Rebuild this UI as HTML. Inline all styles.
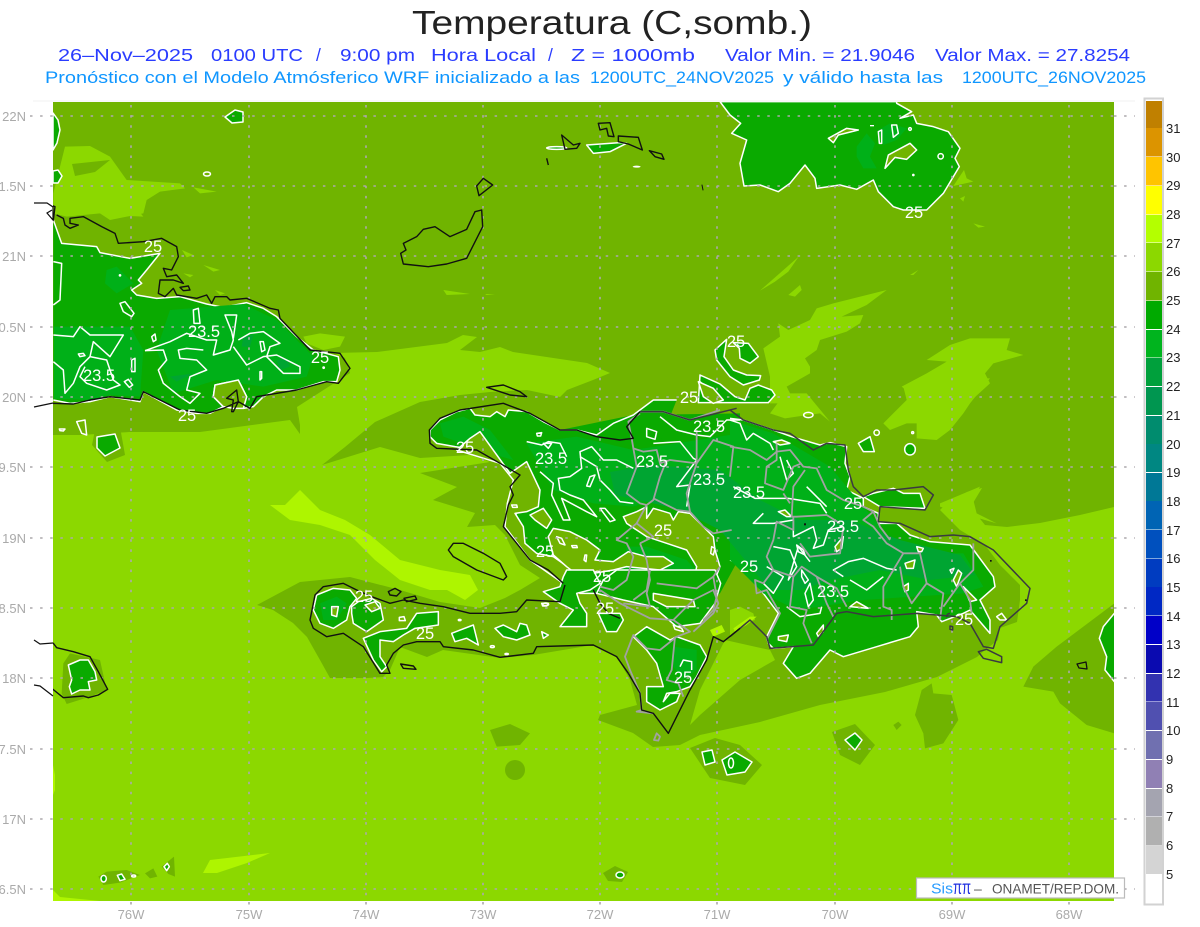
<!DOCTYPE html>
<html><head><meta charset="utf-8"><title>Temperatura</title>
<style>
html,body{margin:0;padding:0;background:#fff}
svg{display:block;font-family:"Liberation Sans",sans-serif}
.m{fill:#70b400}.b{fill:#8cd800}.v{fill:#aef500}
.d{fill:#0aaa00;stroke:#fff;stroke-width:4.5;stroke-linejoin:round}
.dn{fill:#0aaa00}
.l{fill:#00b018}.x{fill:#00a532}
.mw{fill:#70b400;stroke:#fff;stroke-width:4.5;stroke-linejoin:round}
.w{fill:none;stroke:#fff;stroke-width:4.5;stroke-linejoin:round}
.k{fill:none;stroke:#111;stroke-width:4.2;stroke-linejoin:round}
.kd{fill:none;stroke:#3a3a40;stroke-width:4.5;stroke-linejoin:round}
.g{fill:none;stroke:#a2a2a2;stroke-width:5.4;stroke-linejoin:round}
.t{fill:#fff;font-size:16.5px;text-anchor:middle}
.a{fill:#aaa;font-size:13px}
.c{fill:#222;font-size:13px}
</style></head><body>
<svg width="1200" height="927" viewBox="0 0 1200 927" xmlns="http://www.w3.org/2000/svg">
<rect width="1200" height="927" fill="#fff"/>
<text x="412" y="34" font-size="33" fill="#222" textLength="400" lengthAdjust="spacingAndGlyphs">Temperatura (C,somb.)</text>
<g font-size="17.5" fill="#2a3cff">
<text x="58" y="61" textLength="135" lengthAdjust="spacingAndGlyphs">26–Nov–2025</text>
<text x="211" y="61" textLength="92" lengthAdjust="spacingAndGlyphs">0100 UTC</text>
<text x="316" y="61">/</text>
<text x="340" y="61" textLength="75" lengthAdjust="spacingAndGlyphs">9:00 pm</text>
<text x="431" y="61" textLength="105" lengthAdjust="spacingAndGlyphs">Hora Local</text>
<text x="548" y="61">/</text>
<text x="571" y="61" textLength="124" lengthAdjust="spacingAndGlyphs">Z = 1000mb</text>
<text x="725" y="61" textLength="190" lengthAdjust="spacingAndGlyphs">Valor Min. = 21.9046</text>
<text x="935" y="61" textLength="195" lengthAdjust="spacingAndGlyphs">Valor Max. = 27.8254</text>
</g>
<g font-size="17" fill="#0f96ff">
<text x="45" y="83" textLength="535" lengthAdjust="spacingAndGlyphs">Pronóstico con el Modelo Atmósferico WRF inicializado a las</text>
<text x="590" y="83" textLength="184" lengthAdjust="spacingAndGlyphs">1200UTC_24NOV2025</text>
<text x="783" y="83" textLength="160" lengthAdjust="spacingAndGlyphs">y válido hasta las</text>
<text x="962" y="83" textLength="184" lengthAdjust="spacingAndGlyphs">1200UTC_26NOV2025</text>
</g>
<line x1="33" y1="101" x2="1135" y2="101" stroke="#f0f0f0"/>

<svg x="53" y="102" width="1061" height="799" viewBox="53 102 1061 799">
<rect x="53" y="102" width="1061" height="799" class="b"/>
<!-- very bright -->
<polygon class="v" points="270,505 285,505 300,490 320,510 345,520 370,535 400,560 440,570 470,575 478,590 465,600 447,590 430,590 400,580 375,560 350,535 320,525 290,520"/>
<polygon class="v" points="203,873 210,860 270,853 247,863 217,873"/>
<polygon class="v" points="53,890 60,897 100,901 53,901"/>
<polygon class="v" points="53,765 55,775 55,790 53,795"/>
<!-- main mid -->
<polygon class="m" points="53,102 1114,102 1114,507 1080,515 1040,523 1007,527 985,525 977,515 973,503 982,488 967,492 947,503 940,510 950,520 960,530 985,545 1000,565 1020,585 1020,600 1017,622 1000,628 998,640 985,650 977,657 937,677 885,692 820,705 760,722 700,735 680,745 653,747 633,733 598,720 600,715 637,705 630,680 617,657 593,645 533,655 500,658 443,650 427,657 400,647 390,670 383,677 367,678 330,678 320,660 307,637 293,623 273,610 257,605 300,582 350,577 400,590 440,602 480,608 505,598 520,590 540,578 520,565 505,535 495,525 467,527 475,513 433,500 457,487 420,473 490,462 470,455 420,458 380,447 322,465 290,420 200,432 130,432 80,435 53,435"/>
<!-- bright overlays -->
<polygon class="b" points="333,353 377,352 447,343 463,335 477,337 460,350 480,352 500,347 513,352 587,363 610,373 593,380 567,390 560,397 527,390 490,392 460,395 420,402 375,422 345,447 322,465 300,470 300,425 297,407 350,373 345,358"/>
<g class="b" transform="translate(0 0) scale(.33333)">
<polygon points="160,580 195,440 270,438 330,470 380,540 540,550 555,565 480,575 440,600 430,640 330,660 300,640 200,650 160,640"/>
<polygon points="580,562 650,575 600,580"/>
</g>
<polygon class="m" points="72,164 110,160 95,172 75,176"/>
<g class="b" transform="translate(30 200) scale(.33333)">
<polygon points="70,0 300,0 340,50 230,45 170,30 70,40"/>
<polygon points="456,150 490,165 470,172"/><polygon points="520,195 570,210 550,215"/><polygon points="460,220 490,225 480,232"/><polygon points="555,270 585,280 570,285"/>
<polygon points="820,410 870,400 945,410 930,440 880,450 830,430"/>
</g>
<g class="b" transform="translate(300 100) scale(.33333)">
<polygon points="430,570 510,582 440,585"/><polygon points="555,582 585,582 560,585"/>
</g>
<g class="b" transform="translate(700 100) scale(.33333)">
<polygon points="180,572 296,470 265,515 225,545"/><polygon points="265,585 300,555 305,570 285,590"/><polygon points="630,525 655,510 640,525"/>
<polygon points="350,625 400,610 560,570 500,615 425,650 490,645 480,670 440,695 360,720 350,750 315,775 330,800 330,820 260,860 285,910 210,910 210,830 190,745 240,710 235,670 265,690 330,660"/>
<polygon points="680,780 750,735 810,715 930,715 920,750 970,765 880,790 855,820 870,850 810,905 660,905 605,860 680,820 740,785"/>
<polygon points="760,258 792,210 800,235 820,245"/><polygon points="780,295 795,288 790,305"/><polygon points="820,370 855,380 835,383"/>
</g>
<g class="b" transform="translate(730 380) scale(.33333)">
<polygon points="120,100 150,60 180,40 230,40 300,125 270,100 200,110 165,115"/>
<polygon points="460,130 530,60 520,20 570,-5 780,-5 720,70 700,100 660,150 620,180 560,175 560,130 530,130 480,150"/>
<polygon points="630,370 750,320 730,360 740,400 800,430 660,390 630,380"/>
</g>
<polygon class="b" points="725,640 770,650 775,660 740,680 700,715 690,725 700,690"/>
<!-- extra mid patches -->
<g class="m" transform="translate(880 400) scale(.33333)">
<polygon points="430,860 460,800 530,740 703,610 703,1000 620,975 540,910 520,875"/>
<polygon points="125,870 155,850 160,880 215,885 235,960 190,1030 135,1045 130,1000 105,945"/>
<polygon points="40,975 55,965 65,975 50,990"/>
</g>
<g class="m" transform="translate(300 570) scale(.33333)">
<polygon points="570,480 630,462 690,490 660,525 590,530"/>
</g>
<circle class="m" cx="515" cy="770" r="10"/>
<g class="m" transform="translate(40 600) scale(.33333)">
<polygon points="70,190 90,160 180,180 200,270 150,290 80,312 65,280"/>
<polygon points="175,830 200,815 260,810 300,825 240,848 190,855"/>
<polygon points="315,820 340,805 352,830 330,835"/>
<polygon points="365,800 402,770 405,830 385,822"/>
</g>
<polygon class="m" points="690,748 715,738 740,745 762,765 745,785 710,778"/>
<polygon class="m" points="832,732 855,724 875,745 860,765 840,755"/>
<polygon class="m" points="603,873 615,866 628,872 622,882 608,881"/>
<polygon class="m" points="95,430 120,427 125,455 107,462 92,445"/>

<!-- Cuba / west land -->
<g transform="translate(30 200) scale(.33333)">
<polyline class="d" points="70,60 95,130 200,140 210,158 300,175 360,165 390,160 350,210 325,240 335,250 305,270 320,285 380,295 450,290 530,312 580,322 650,308 700,325 740,350 800,410 850,450 925,470 930,510 920,545 880,545 800,570 740,570 700,590 670,620 640,625 650,590 625,540 555,555 550,590 580,620 540,640 500,640 440,630 340,575 330,605 240,590 180,605 120,610 70,600"/>
<polygon class="l" points="72,380 300,380 340,450 330,590 240,585 180,600 72,596"/>
<polygon class="l" points="420,330 640,312 740,360 850,470 830,530 700,560 560,540 430,580 380,450"/>
<polygon class="l" points="230,210 260,200 310,250 260,280 225,250"/>
<polygon class="x" points="740,480 770,475 780,500 750,510"/><polygon class="x" points="640,410 670,405 660,440 635,440"/><polygon class="x" points="420,530 490,520 440,545"/>
<polygon class="mw" points="555,555 625,540 650,590 640,625 610,625 580,620 550,590"/>
<polyline class="w" points="70,185 95,190 90,300 70,315"/>
<polyline class="w" points="70,405 130,410 150,380 180,405 250,405 280,405 240,470 190,425 180,470 150,500 130,550 105,580 100,510 70,485"/>
<polygon class="w" points="270,310 285,305 312,340 305,350 280,335"/>
<polygon class="w" points="365,410 375,402 378,420 370,425"/>
<polygon class="w" points="145,462 160,460 165,467 150,470"/>
<polygon class="w" points="305,480 315,475 315,515 305,515"/>
<polygon class="w" points="283,545 295,538 308,555 298,562"/>
<polyline class="w" points="180,470 230,480 250,540 270,555 230,570 170,550 150,530 165,500"/>
<polyline class="w" points="345,452 420,425 470,400 530,420 560,420 550,465 600,450 610,420 605,395 585,345 620,345 610,415"/>
<polygon class="w" points="490,330 505,325 510,370 492,370"/>
<polyline class="w" points="345,452 400,450 410,480 385,510 400,550 450,590 480,610 510,580 470,570 480,530 530,510 500,480 450,475 445,450 470,445 520,450"/>
<polyline class="w" points="610,440 650,495 680,480 700,470 740,465 810,500 810,520 760,520 710,470 720,440 750,430 700,395 660,400 625,420"/>
<polygon class="w" points="690,425 700,425 705,450 695,455"/>
<polygon class="w" points="690,515 695,515 695,535 690,540"/>
<circle class="w" cx="881" cy="503" r="2"/>
<circle cx="270" cy="226" r="4" fill="#fff"/>
<polygon class="w" points="88,687 105,687 100,693 90,692"/>
<polygon class="w" points="140,665 165,660 170,705 155,700"/>
</g>
<polygon class="d" style="stroke-width:1.5" points="97,437 115,434 120,448 105,456 97,448"/>

<!-- Hispaniola -->
<g transform="translate(420 380) scale(.33333)">
<polygon class="dn" points="420,150 640,105 960,100 960,530 900,640 880,660 540,640 430,610 330,540 260,440 285,300"/>
<polyline class="d" points="540,640 480,640 430,610 330,540 260,440 290,400 285,300 240,250 170,210 105,200 50,190 30,170 30,150 60,120 110,95 150,85 165,105 210,110 230,95 255,110 265,90 320,95 370,125 420,150 470,150 530,165 580,130 640,105 700,60 770,60"/>
<polygon class="l" points="320,190 470,170 640,210 960,160 960,400 780,330 640,380 520,370 400,330"/>
<polygon class="l" points="60,130 130,110 210,150 280,240 210,220 70,170"/>
<polygon class="l" points="620,500 680,500 800,540 870,620 700,610 600,620"/>
</g>
<g transform="translate(730 380) scale(.33333)">
<polyline class="d" points="0,115 40,120 130,150 185,170 270,195 300,188 350,200 345,250 360,290 350,330 400,355 400,380 445,400 445,430 500,430 540,465 600,485 720,495 790,590 795,620 750,660 780,720 780,760 720,690 700,700 635,725 620,705 560,695 565,740 540,770 440,800 340,830 300,810 240,880 200,895 160,850 190,800 130,805 115,790 110,770 145,700 130,680 100,640 70,600 60,570 0,540"/>
<polygon class="d" points="400,350 430,340 490,325 520,340 570,340 585,385 450,380"/>
<polygon class="l" points="0,120 130,160 300,260 400,380 520,520 700,520 760,620 700,640 400,660 200,690 100,640 0,540"/>
</g>
<polygon class="x" points="610,472 650,465 720,470 760,500 800,520 850,520 900,540 960,555 975,575 930,580 880,570 830,580 800,590 770,590 745,560 720,530 680,510 640,500 615,495"/>

<!-- top lobes -->
<g transform="translate(700 100) scale(.33333)">
<polygon class="d" points="145,730 175,770 150,790 120,775 118,745 100,728"/>
<polygon class="d" points="80,718 45,750 50,780 90,830 130,855 178,840 182,827 140,825 100,810 72,770"/>
<polygon class="d" points="0,825 60,852 105,890 135,900 150,865 175,855 215,870 225,885 205,908 -5,908"/>
<polyline class="w" points="0,845 50,890 55,905"/>
<polygon class="d" points="60,5 90,45 122,70 95,100 140,120 120,190 132,258 180,255 235,275 270,250 315,195 345,235 350,265 420,255 470,268 520,240 535,275 580,320 610,330 680,330 730,280 778,200 765,175 780,145 745,95 700,80 650,70 640,45 600,55 635,35 590,10 590,5"/>
<polygon class="l" points="470,140 500,100 525,130 510,170 530,205 490,205 470,170"/>
<polygon class="l" points="535,90 570,70 620,85 590,120 550,135"/>
<polygon class="mw" points="385,115 440,85 475,90 415,105 400,128"/>
<polygon class="mw" points="555,205 565,165 630,130 650,150 620,178 585,172"/>
<polygon class="w" points="535,95 545,90 545,130 538,130"/>
<polygon class="w" points="575,75 590,75 595,100 580,112"/>
<circle class="w" cx="630" cy="87" r="4"/><circle class="w" cx="722" cy="169" r="8"/>
<circle cx="640" cy="225" r="4" fill="#fff"/><rect x="510" y="75" width="12" height="4" fill="#fff"/>
</g>
<g transform="translate(420 380) scale(.33333)">
<polygon class="mw" points="835,5 880,25 910,60 880,70 850,50"/>
<polygon class="mw" points="180,155 270,280 320,245 360,330 355,380 320,395 285,400 310,440 315,490 350,520 400,530 450,565 430,610 330,540 255,440 262,370 280,300 240,250 110,210 150,175"/>
<polygon class="mw" points="330,405 370,385 395,420 380,445 345,420"/>
<polygon class="mw" points="385,470 400,445 450,455 500,480 540,510 525,540 580,545 625,515 680,530 730,530 760,550 720,570 620,560 580,570 520,580 480,590 440,560 400,525"/>
<polygon class="mw" points="610,410 650,395 680,380 680,415 700,385 750,400 760,420 775,395 810,400 830,420 880,470 885,510 900,560 880,610 830,630 820,610 830,560 800,510 740,490 680,470 620,430"/>
<polygon class="w" points="680,145 710,155 705,178 680,170"/>
<polyline class="w" points="720,110 770,150 830,165 870,170 920,120 960,120"/>
<polyline class="w" points="700,190 780,185 820,235 830,240 770,320 810,315 800,380"/>
<polyline class="w" points="320,185 365,195 385,185 420,190 440,230"/>
<polyline class="w" points="360,275 400,310 395,345 430,420 450,420 425,355 500,395 530,410 490,360 450,345 420,330 415,295 450,290 485,265 480,215 515,200 550,240 590,240 640,265"/>
<polyline class="w" points="480,230 530,260 540,300 570,330 600,365 640,370"/>
<polygon class="w" points="510,290 525,285 510,320 500,318"/>
<polygon class="w" points="540,385 555,385 585,420 570,425"/>
<polygon class="w" points="410,470 425,475 435,495 420,490"/>
<polygon class="w" points="455,497 470,497 472,503 458,503"/>
<polygon class="w" points="495,525 500,525 498,545 492,540"/>
<polygon class="w" points="275,375 290,375 292,382 278,382"/>
<polygon class="w" points="350,160 365,158 362,168 352,168"/>
<polygon class="w" points="370,190 395,190 385,205"/>
<polygon class="w" points="365,670 385,670 380,678 368,678"/>
<polygon class="w" points="875,625 880,625 880,632 875,632"/>
<polygon class="w" points="875,500 885,505 880,525 872,520"/>
</g>
<g transform="translate(730 380) scale(.33333)">
<polyline class="w" points="0,120 30,130 50,180 70,160 120,190 130,210"/>
<polyline class="w" points="10,320 75,355 175,355 270,370 290,400"/>
<polyline class="w" points="100,400 70,430 130,430 190,420 190,470 250,440 260,480 250,505 280,495 295,450 340,440"/>
<polyline class="w" points="230,320 290,380"/>
<polyline class="w" points="150,230 170,300 190,280 170,240"/>
<polyline class="w" points="340,590 310,570 355,545 400,535 470,565 500,570"/>
<polyline class="w" points="130,500 180,510 200,560 175,600 205,500 240,545"/>
<polyline class="w" points="110,560 160,590 130,640 100,610"/>
<polyline class="w" points="170,680 210,710 270,700 275,680"/>
<polyline class="w" points="360,600 410,630 460,590"/>
<polygon class="w" points="215,570 235,600 225,610 215,590"/>
<polygon class="w" points="240,610 250,660 235,680 225,640"/>
<polygon class="mw" points="360,680 415,685 380,665"/>
<polygon class="mw" points="145,770 175,765 170,785 145,780"/>
<polygon class="mw" points="260,760 280,735 280,755 265,770"/>
<polygon class="mw" points="315,500 340,470 335,505 320,515"/>
<polygon class="mw" points="145,395 165,390 185,410 170,410"/>
<polygon class="mw" points="525,550 555,540 550,565 530,565"/>
<polygon class="mw" points="660,570 672,565 665,580"/>
<polygon class="mw" points="670,600 685,570 695,580 680,620"/>
<polygon class="mw" points="520,620 535,610 535,630 525,635"/>
<polygon class="mw" points="800,710 815,700 830,720 810,720"/>
<polygon class="mw" points="700,620 740,660 720,665"/>
<polygon class="mw" points="560,500 580,505 575,515 565,515"/>
<polygon class="w" points="200,495 220,510 225,525 205,515"/>
<polygon class="d" points="385,190 420,170 433,215 400,215"/>
<circle class="w" cx="440" cy="158" r="8"/><ellipse class="d" cx="540" cy="208" rx="16" ry="17"/><circle cx="548" cy="158" r="3" class="w"/>
<ellipse class="w" cx="235" cy="105" rx="14" ry="8"/>
<polygon class="mw" points="130,185 155,180 180,190 150,195"/>
</g>
<!-- Tiburon -->
<g transform="translate(300 570) scale(.33333)">
<polygon class="d" points="50,75 100,55 150,60 170,85 150,110 140,150 100,175 60,160 40,120"/>
<polygon class="l" points="60,100 110,80 140,100 110,150 70,150"/>
<polygon class="mw" points="95,110 115,110 110,140 95,135"/>
<polygon class="d" points="155,110 175,95 215,85 240,100 250,150 200,185 160,160 155,130"/>
<polygon class="mw" points="195,105 225,95 240,115 215,125"/>
<polygon class="d" points="190,205 240,185 320,175 350,130 415,125 415,165 345,175 310,195 280,215 240,210 240,260 260,290 245,305 220,270"/>
<polygon class="d" points="455,190 520,165 535,225 500,205 465,215"/>
<polygon class="d" points="585,175 610,165 650,185 660,160 680,165 690,195 650,210 610,200"/>
<polygon class="d" points="725,185 745,195 730,205"/>
<polygon class="w" points="298,142 312,140 316,152 298,152"/>
<ellipse class="w" cx="479" cy="150" rx="4" ry="2"/><ellipse class="w" cx="577" cy="230" rx="6" ry="3"/><ellipse class="w" cx="620" cy="252" rx="5" ry="2"/><ellipse class="w" cx="737" cy="103" rx="9" ry="4"/>
<polygon class="d" points="730,65 780,50 790,20 800,0 880,0 900,40 870,60 830,70 840,100 860,130 860,170 780,170 820,120 780,100"/>
<polygon class="d" points="895,130 960,130 970,150 950,185 920,185"/>
<polygon class="d" points="1040,170 1110,210 1130,200 1200,225 1220,260 1190,320 1170,350 1130,365 1100,370 1090,395 1110,370 1140,370 1130,395 1080,420 1040,395 1040,350 1090,350 1070,280 1040,240 1000,200"/>
<polygon class="l" points="1120,230 1190,240 1190,300 1150,330 1120,290"/>
<polygon class="d" points="1060,0 1245,0 1262,40 1245,100 1200,160 1130,170 1060,110 970,90 890,70 910,30 950,0"/>
<polygon class="mw" points="1060,70 1180,90 1185,110 1100,110 1060,90"/>
<polygon class="mw" points="1120,165 1145,175 1150,185 1125,178"/>
<polyline class="w" points="1140,290 1150,270 1175,275 1175,300"/>
<polygon class="v" points="1230,180 1265,165 1275,185 1240,200"/>
</g>
<g transform="translate(730 380) scale(.33333)">
<polygon class="b" points="0,690 30,680 70,700 75,720 45,730 0,770"/>
<polygon class="v" points="10,745 60,710 80,710 50,735 15,755"/>
</g>
<!-- small west islands -->
<g transform="translate(40 600) scale(.33333)">
<polygon class="d" points="85,195 120,180 145,180 165,215 170,240 145,245 150,270 120,270 95,282 88,260 95,240"/>
<ellipse class="d" cx="191" cy="836" rx="8" ry="10"/>
<polygon class="d" points="232,826 245,822 255,838 240,842"/>
<ellipse class="w" cx="281" cy="828" rx="6" ry="3"/>
<polygon class="d" points="372,800 382,790 388,800 380,812"/>
</g>
<!-- other dark islets -->
<polygon class="d" style="stroke-width:1.5" points="225,117 235,110 243,112 243,122 232,123"/>
<polygon class="d" style="stroke-width:1.5" points="53,113 58,120 60,130 57,143 53,150"/>
<polygon class="d" style="stroke-width:1.5" points="53,171 58,170 62,176 58,183 53,183"/>
<ellipse class="w" cx="207" cy="174" rx="3.5" ry="2" style="stroke-width:1.5"/>
<polygon class="d" style="stroke-width:1.5" points="702,752 712,750 715,762 705,765"/>
<polygon class="d" style="stroke-width:1.5" points="722,760 735,752 752,762 745,772 727,775"/>
<ellipse class="w" cx="731" cy="763" rx="2.5" ry="5" style="stroke-width:1.5"/>
<polygon class="d" style="stroke-width:1.5" points="845,740 855,733 862,740 855,750"/>
<ellipse class="d" style="stroke-width:1.5" cx="620" cy="875" rx="4" ry="3"/>
<g transform="translate(880 400) scale(.33333)">
<polygon class="d" points="703,640 670,680 658,715 680,770 675,810 703,845 720,845 720,640"/>
</g>
<g transform="translate(300 100) scale(.33333)">
<polygon class="d" points="860,135 960,128 980,130 930,155 880,160"/>
<ellipse class="d" cx="770" cy="144" rx="30" ry="4" />
<ellipse cx="1010" cy="200" rx="12" ry="3" fill="#fff"/>
</g>
<!-- grid -->
<g stroke="#aca8ac" stroke-width="1.6" stroke-dasharray="2.5 7.6" fill="none">
<path d="M30 116H1135M30 186H1135M30 256H1135M30 327H1135M30 397H1135M30 467H1135M30 538H1135M30 608H1135M30 678H1135M30 749H1135M30 819H1135M30 889H1135"/>
<path d="M131 105V912M249 105V912M366 105V912M483 105V912M600 105V912M717 105V912M835 105V912M952 105V912M1069 105V912"/>
</g>
<!-- Borders -->
<g transform="translate(420 380) scale(.33333)">
<polyline class="g" points="660,100 625,125 635,175 640,205 650,260 620,340 660,370 680,375 650,430 590,480 620,490 640,530 620,600 580,630 540,620"/>
<polyline class="g" points="640,205 670,215 710,210 720,250 750,240 830,250 880,180 940,200 930,290"/>
<polyline class="g" points="680,375 700,360 720,290 740,240"/>
<polyline class="g" points="700,355 770,390 810,395 850,440 880,460 935,450"/>
<polyline class="g" points="660,490 680,540 690,600 680,640 690,680 610,670"/>
<polyline class="g" points="830,150 830,250 800,340 810,395"/>
<polyline class="g" points="660,95 730,95 810,120 900,90"/>
<polyline class="g" points="880,590 830,625 710,610"/>
<polyline class="g" points="900,560 880,590 890,650 880,690 850,720"/>
<polyline class="g" points="650,430 700,470 660,490"/>
</g>
<g transform="translate(300 570) scale(.33333)">
<polyline class="g" points="900,60 960,100 1050,145 1120,150 1170,185 1130,200 1080,240 1040,235 1000,195 975,260 990,300 1020,370 1025,420 1010,425 1060,430"/>
<polyline class="g" points="1050,0 1040,60 1000,90"/>
<polyline class="g" points="1120,150 1180,90 1240,60 1255,100 1240,130 1180,185"/>
<polyline class="g" points="1125,200 1115,300 1100,330 1135,340 1150,380"/>
<polygon class="g" points="1070,490 1080,500 1075,512 1062,510"/>
</g>
<g transform="translate(730 380) scale(.33333)">
<polyline class="g" points="0,200 60,210 110,240 140,215 180,210 220,260 260,265 290,330 340,360 400,380 430,395 400,420 430,440 470,490 520,520 490,570 460,620 460,680 485,690 485,720"/>
<polyline class="g" points="140,190 140,240 110,260 105,310 160,330 190,260 215,250"/>
<polyline class="g" points="180,370 160,340"/>
<polyline class="g" points="225,270 190,320 185,410 200,410 290,405 330,430"/>
<polyline class="g" points="190,410 190,450 140,425 130,480 110,530 130,570 100,610 75,600 80,640 110,630 150,700 110,780"/>
<polyline class="g" points="130,570 190,590 180,680 230,690 220,730 245,790"/>
<polyline class="g" points="190,590 215,560 260,590 320,625 350,680"/>
<polyline class="g" points="260,590 290,670 310,710"/>
<polyline class="g" points="340,440 330,520 240,530 210,490"/>
<polyline class="g" points="520,520 570,520 590,610 640,640 630,720"/>
<polyline class="g" points="510,560 520,620 545,670 590,610"/>
<polyline class="g" points="730,490 730,570 690,610 640,680"/>
<polyline class="g" points="690,610 720,660 725,700"/>
<polyline class="g" points="430,395 450,440 480,480"/>
</g>
<!-- coasts -->
<g transform="translate(30 200) scale(.33333)">
<polyline class="k" points="80,45 100,55 105,75 120,85 145,75 120,70 120,55 160,50 215,80 255,100 265,130 340,125 395,115 440,140 445,170 425,210 400,205 410,230 440,225 460,250 430,240 390,240 385,280 405,290 430,265 440,285 500,295 530,285 545,310 555,290 590,290 600,300 650,295 720,325 745,330 750,355 840,450 930,460 960,505 925,550 890,545 800,570 680,590 660,625 625,605 610,635 605,635 610,600 590,595 620,570 625,605 580,625 530,640 450,630 340,575 330,600 240,590 180,600 130,612 70,610 15,620"/>
<polygon class="k" points="450,262 475,258 480,270 460,272"/>
<polyline class="k" points="10,10 50,10 75,20 70,60 50,40 65,30"/>
</g>
<g transform="translate(300 100) scale(.33333)">
<polygon class="k" points="895,70 930,68 942,110 925,108 920,85 900,90"/>
<polygon class="k" points="785,105 820,135 840,130 830,145 795,148"/>
<polygon class="k" points="955,108 1015,112 1027,150 985,132 955,125"/>
<polygon class="k" points="1048,152 1085,162 1092,178 1065,170"/>
<polyline class="k" points="740,175 745,195"/>
<polygon class="k" points="530,258 550,235 578,255 537,287"/>
<polygon class="k" points="310,430 350,410 370,388 405,380 450,410 500,388 525,335 545,330 548,380 500,475 440,492 385,500 310,492 302,460 318,450"/>
</g>
<polygon class="k" style="stroke-width:1" points="702,185 703,190"/>
<g transform="translate(420 380) scale(.33333)">
<polygon class="k" points="85,510 100,490 130,490 190,520 240,550 260,590 250,600 170,570 100,530"/>
<polygon class="k" points="200,22 250,15 300,35 320,50 270,45"/>
<polyline class="k" points="430,610 385,570 330,540 250,440 265,375 280,345 270,320 300,285 240,250 170,210 50,205 30,190 28,150 60,115 120,90 250,70 330,100 420,150 470,150 530,170 600,180 640,175 620,140 660,95"/>
<polyline class="kd" points="660,95 730,95 810,120 950,85"/>
</g>
<g transform="translate(730 380) scale(.33333)">
<polyline class="kd" points="0,90 40,120 130,150 180,160 250,210 290,190 345,195 355,270 370,320 400,350 440,330 490,330 580,320 610,345 585,390 450,380 445,425 510,430 600,470 670,465 720,470 790,510 900,625 890,670 810,740 790,805 760,800 720,730 680,710 560,700 430,710 350,695 320,700 250,795 120,805 110,770 60,720 0,770"/>
<polygon class="kd" points="745,815 770,808 815,830 815,848 760,835"/>
<polygon class="kd" points="660,738 668,740 668,750 660,748"/>
<path d="M660 700a10 10 0 0 0 -10 12" class="kd"/>
<rect x="222" y="430" width="6" height="6" fill="#111"/><rect x="780" y="540" width="5" height="5" fill="#111"/><rect x="885" y="658" width="5" height="5" fill="#111"/>
</g>
<g transform="translate(300 570) scale(.33333)">
<polyline class="k" points="795,45 780,95 680,90 650,125 600,130 510,130 430,110 360,100 310,90 270,100 215,80 170,60 130,40 70,50 45,75 30,150 40,175 80,200 130,190 190,230 240,310 270,310 260,285 280,250 310,225 350,215 420,215 430,230 520,240 600,262 700,250 710,230 880,225 950,260 985,310"/>
<polyline class="k" points="985,310 1020,370 1025,420 1060,430 1105,490 1170,360 1220,270 1240,200 1270,215 1320,175"/>
<polygon class="k" points="265,65 285,55 303,65 290,78 270,75"/>
<polygon class="k" points="312,85 345,78 350,88 320,95"/>
<polygon class="k" points="302,282 340,288 348,298 310,295"/>
<polyline class="k" points="880,60 900,100 925,130 960,145"/>
</g>
<g transform="translate(40 600) scale(.33333)">
<polyline class="k" points="0,120 40,130 50,143 100,155 150,170 175,215 203,268 175,285 145,293 130,288 70,293 35,265 0,258"/>
</g>
<polygon class="k" style="stroke-width:1.3" points="1077,664 1086,662 1087,669 1079,668"/>
<!-- labels -->
<g class="t">
<text x="153" y="252">25</text><text x="204" y="337">23.5</text><text x="99" y="381">23.5</text><text x="320" y="363">25</text><text x="187" y="421">25</text><text x="465" y="453">25</text><text x="551" y="464">23.5</text><text x="652" y="467">23.5</text><text x="709" y="432">23.5</text><text x="709" y="485">23.5</text><text x="749" y="498">23.5</text><text x="853" y="509">25</text><text x="843" y="532">23.5</text><text x="663" y="536">25</text><text x="545" y="557">25</text><text x="602" y="582">25</text><text x="605" y="614">25</text><text x="749" y="572">25</text><text x="833" y="597">23.5</text><text x="364" y="602">25</text><text x="425" y="639">25</text><text x="683" y="683">25</text><text x="964" y="625">25</text><text x="914" y="218">25</text><text x="736" y="347">25</text><text x="689" y="403">25</text>
</g>
</svg>
<!-- external dots -->
<g stroke="#aca8ac" stroke-width="1.6" stroke-dasharray="2.5 7.6" fill="none">
<path d="M30 116H53M30 186H53M30 256H53M30 327H53M30 397H53M30 467H53M30 538H53M30 608H53M30 678H53M30 749H53M30 819H53M30 889H53"/>
<path d="M1114 116H1135M1114 186H1135M1114 256H1135M1114 327H1135M1114 397H1135M1114 467H1135M1114 538H1135M1114 608H1135M1114 678H1135M1114 749H1135M1114 819H1135M1114 889H1135"/>
<path d="M131 902V912M249 902V912M366 902V912M483 902V912M600 902V912M717 902V912M835 902V912M952 902V912M1069 902V912"/>
</g>
<!-- stub coast west of map -->
<g fill="none" stroke="#111" stroke-width="1.2">
<path d="M34 203H47L53 207V220L47 213L52 210"/>
<path d="M34 407L53 403"/>
<path d="M34 640L40 644 53 643M34 685L40 686 53 696"/>
</g>
<g class="a" text-anchor="end">
<text x="26" y="121">22N</text><text x="26" y="191">1.5N</text><text x="26" y="261">21N</text><text x="26" y="332">0.5N</text><text x="26" y="402">20N</text><text x="26" y="472">9.5N</text><text x="26" y="543">19N</text><text x="26" y="613">8.5N</text><text x="26" y="683">18N</text><text x="26" y="754">7.5N</text><text x="26" y="824">17N</text><text x="26" y="894">6.5N</text>
</g>
<g class="a" text-anchor="middle">
<text x="131" y="919">76W</text><text x="249" y="919">75W</text><text x="366" y="919">74W</text><text x="483" y="919">73W</text><text x="600" y="919">72W</text><text x="717" y="919">71W</text><text x="835" y="919">70W</text><text x="952" y="919">69W</text><text x="1069" y="919">68W</text>
</g>
<!-- colorbar -->
<rect x="1144.5" y="98.5" width="18.5" height="806" fill="#fff" stroke="#d2d2d2" stroke-width="2"/>
<g>
<rect x="1146" y="101" width="16" height="27" fill="#c08000"/>
<rect x="1146" y="128" width="16" height="28.5" fill="#dc9400"/>
<rect x="1146" y="157" width="16" height="28.5" fill="#ffc400"/>
<rect x="1146" y="186" width="16" height="28.5" fill="#ffff00"/>
<rect x="1146" y="215" width="16" height="27.5" fill="#b4ff00"/>
<rect x="1146" y="243" width="16" height="28.5" fill="#8cd800"/>
<rect x="1146" y="272" width="16" height="28.5" fill="#70b400"/>
<rect x="1146" y="301" width="16" height="28" fill="#00aa00"/>
<rect x="1146" y="330" width="16" height="27.5" fill="#00b41e"/>
<rect x="1146" y="358" width="16" height="28" fill="#00a03c"/>
<rect x="1146" y="387" width="16" height="28" fill="#009650"/>
<rect x="1146" y="416" width="16" height="28" fill="#008c6e"/>
<rect x="1146" y="444" width="16" height="28" fill="#008782"/>
<rect x="1146" y="473" width="16" height="28" fill="#007896"/>
<rect x="1146" y="501" width="16" height="28.5" fill="#0064b4"/>
<rect x="1146" y="530" width="16" height="28.5" fill="#0050be"/>
<rect x="1146" y="559" width="16" height="28" fill="#003cc0"/>
<rect x="1146" y="587" width="16" height="28.5" fill="#0028c4"/>
<rect x="1146" y="616" width="16" height="28" fill="#0000c8"/>
<rect x="1146" y="645" width="16" height="28" fill="#0a0ab0"/>
<rect x="1146" y="674" width="16" height="27.5" fill="#3232b0"/>
<rect x="1146" y="702" width="16" height="28" fill="#5050b0"/>
<rect x="1146" y="731" width="16" height="28" fill="#7070b0"/>
<rect x="1146" y="760" width="16" height="28" fill="#9080b4"/>
<rect x="1146" y="789" width="16" height="27.5" fill="#a4a4b0"/>
<rect x="1146" y="817" width="16" height="28.5" fill="#b0b0b0"/>
<rect x="1146" y="846" width="16" height="28" fill="#d4d4d4"/>
<rect x="1146" y="874" width="16" height="29" fill="#fff"/>
</g>
<g class="c">
<text x="1166" y="133">31</text><text x="1166" y="162">30</text><text x="1166" y="190">29</text><text x="1166" y="219">28</text><text x="1166" y="248">27</text><text x="1166" y="276">26</text><text x="1166" y="305">25</text><text x="1166" y="334">24</text><text x="1166" y="362">23</text><text x="1166" y="391">22</text><text x="1166" y="420">21</text><text x="1166" y="449">20</text><text x="1166" y="477">19</text><text x="1166" y="506">18</text><text x="1166" y="535">17</text><text x="1166" y="563">16</text><text x="1166" y="592">15</text><text x="1166" y="621">14</text><text x="1166" y="649">13</text><text x="1166" y="678">12</text><text x="1166" y="707">11</text><text x="1166" y="735">10</text><text x="1166" y="764">9</text><text x="1166" y="793">8</text><text x="1166" y="821">7</text><text x="1166" y="850">6</text><text x="1166" y="879">5</text>
</g>
<!-- credit -->
<rect x="916.5" y="878" width="208" height="20" fill="#fff" stroke="#bbb" stroke-width="1.2"/>
<text x="931" y="893.5" font-size="14.5" fill="#2a9cff" textLength="22" lengthAdjust="spacingAndGlyphs">Sis</text>
<text x="953" y="894" font-size="19" fill="#2030e0" textLength="18" lengthAdjust="spacingAndGlyphs">ππ</text>
<text x="974" y="893.5" font-size="14" fill="#555">–</text>
<text x="992" y="893.5" font-size="14" fill="#555" textLength="127" lengthAdjust="spacingAndGlyphs">ONAMET/REP.DOM.</text>
</svg>
</body></html>
